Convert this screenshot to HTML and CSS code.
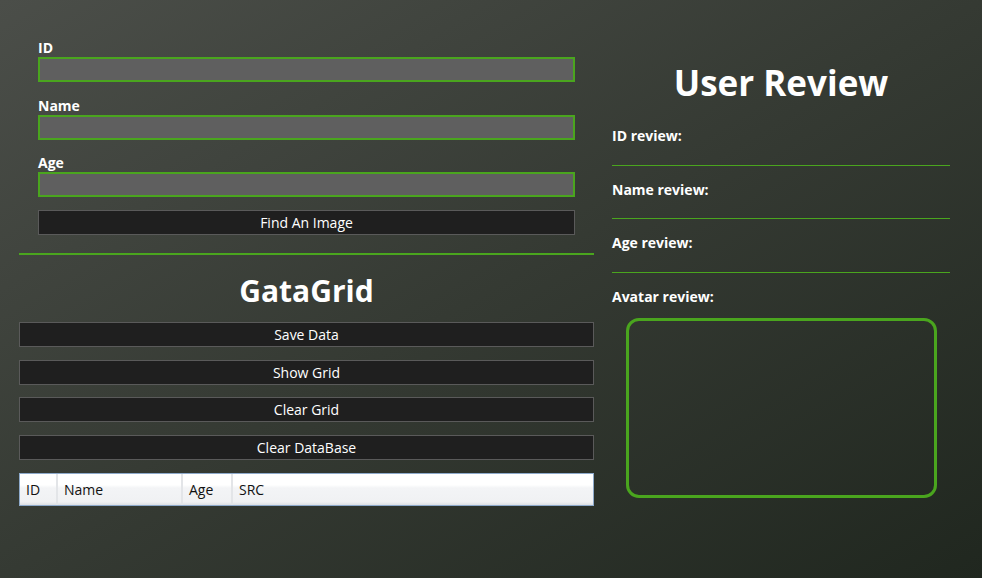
FILE: index.html
```html
<!DOCTYPE html>
<html>
<head>
<meta charset="utf-8">
<link rel="stylesheet" href="styles.css">
</head>
<body>
<div class="page">
  <div class="left">
    <div class="form">
      <label class="lbl">ID</label>
      <div class="input"></div>
      <label class="lbl">Name</label>
      <div class="input second"></div>
      <label class="lbl">Age</label>
      <div class="input third"></div>
      <div class="btn find">Find An Image</div>
    </div>
    <div class="divider"></div>
    <h2 class="grid-title">GataGrid</h2>
    <div class="actions">
      <div class="btn">Save Data</div>
      <div class="btn">Show Grid</div>
      <div class="btn">Clear Grid</div>
      <div class="btn">Clear DataBase</div>
    </div>
    <div class="datagrid">
      <div class="col c-id">ID</div>
      <div class="col c-name">Name</div>
      <div class="col c-age">Age</div>
      <div class="col c-src">SRC</div>
    </div>
  </div>
  <div class="right">
    <h1 class="review-title">User Review</h1>
    <div class="field"><span>ID review:</span></div>
    <div class="field"><span>Name review:</span></div>
    <div class="field"><span>Age review:</span></div>
    <div class="field last"><span>Avatar review:</span></div>
    <div class="avatar"></div>
  </div>
</div>
</body>
</html>
```
FILE: styles.css
```css
html, body {
  margin: 0;
  height: 100%;
}
body {
  background: linear-gradient(to bottom right, #4b4e49 0%, #353a33 50%, #20271f 100%);
  font-family: "Open Sans", "Noto Sans", sans-serif;
  color: #fff;
  overflow: hidden;
}
.page {
  display: flex;
  padding-left: 19px;
  gap: 18px;
}
.left {
  width: 575px;
  display: flex;
  flex-direction: column;
}
.form {
  display: flex;
  flex-direction: column;
  padding: 39px 19px 0;
}
.lbl {
  font-weight: 700;
  font-size: 14px;
  line-height: 18px;
  height: 18px;
}
.input {
  height: 21px;
  border: 2px solid #4aa51e;
  background: #5f5f5f;
  margin-bottom: 15px;
}
.input.second {
  margin-bottom: 14px;
}
.input.third {
  margin-bottom: 13px;
}
.btn {
  height: 23px;
  border: 1px solid #5a5a5a;
  background: #1f1f1f;
  font-size: 14px;
  line-height: 23px;
  text-align: center;
  color: #fff;
}
.divider {
  height: 2px;
  background: #4aa51e;
  margin-top: 18px;
}
.grid-title {
  margin: 0;
  font-size: 30px;
  font-weight: 700;
  text-align: center;
  line-height: 40px;
  margin-top: 16px;
  height: 51px;
}
.actions {
  display: flex;
  flex-direction: column;
  gap: 12.7px;
}
.datagrid {
  margin-top: 12.5px;
  height: 31px;
  border: 1px solid #8eaacb;
  display: flex;
  background: linear-gradient(#ffffff 0%, #ffffff 35%, #f3f4f6 45%, #f0f1f3 90%, #dde0e4 100%);
}
.col {
  color: #111;
  font-size: 14px;
  line-height: 31px;
  padding-left: 6px;
  border-right: 2px solid #e3e5e8;
  box-sizing: border-box;
}
.c-id { width: 38px; }
.c-name { width: 125px; }
.c-age { width: 50px; }
.c-src { flex: 1; border-right: none; }
.right {
  width: 338px;
  display: flex;
  flex-direction: column;
}
.review-title {
  margin: 0;
  margin-top: 58px;
  font-size: 35px;
  line-height: 50px;
  font-weight: 700;
  text-align: center;
  height: 54px;
}
.field {
  height: 53.5px;
  border-bottom: 1px solid #4aa51e;
  box-sizing: border-box;
  font-weight: 700;
  font-size: 14px;
  padding-top: 14px;
}
.field.last {
  border-bottom: none;
  height: 45px;
}
.avatar {
  align-self: center;
  width: 305px;
  height: 174px;
  border: 3px solid #4aa51e;
  border-radius: 13px;
  margin-left: 1px;
}
```
